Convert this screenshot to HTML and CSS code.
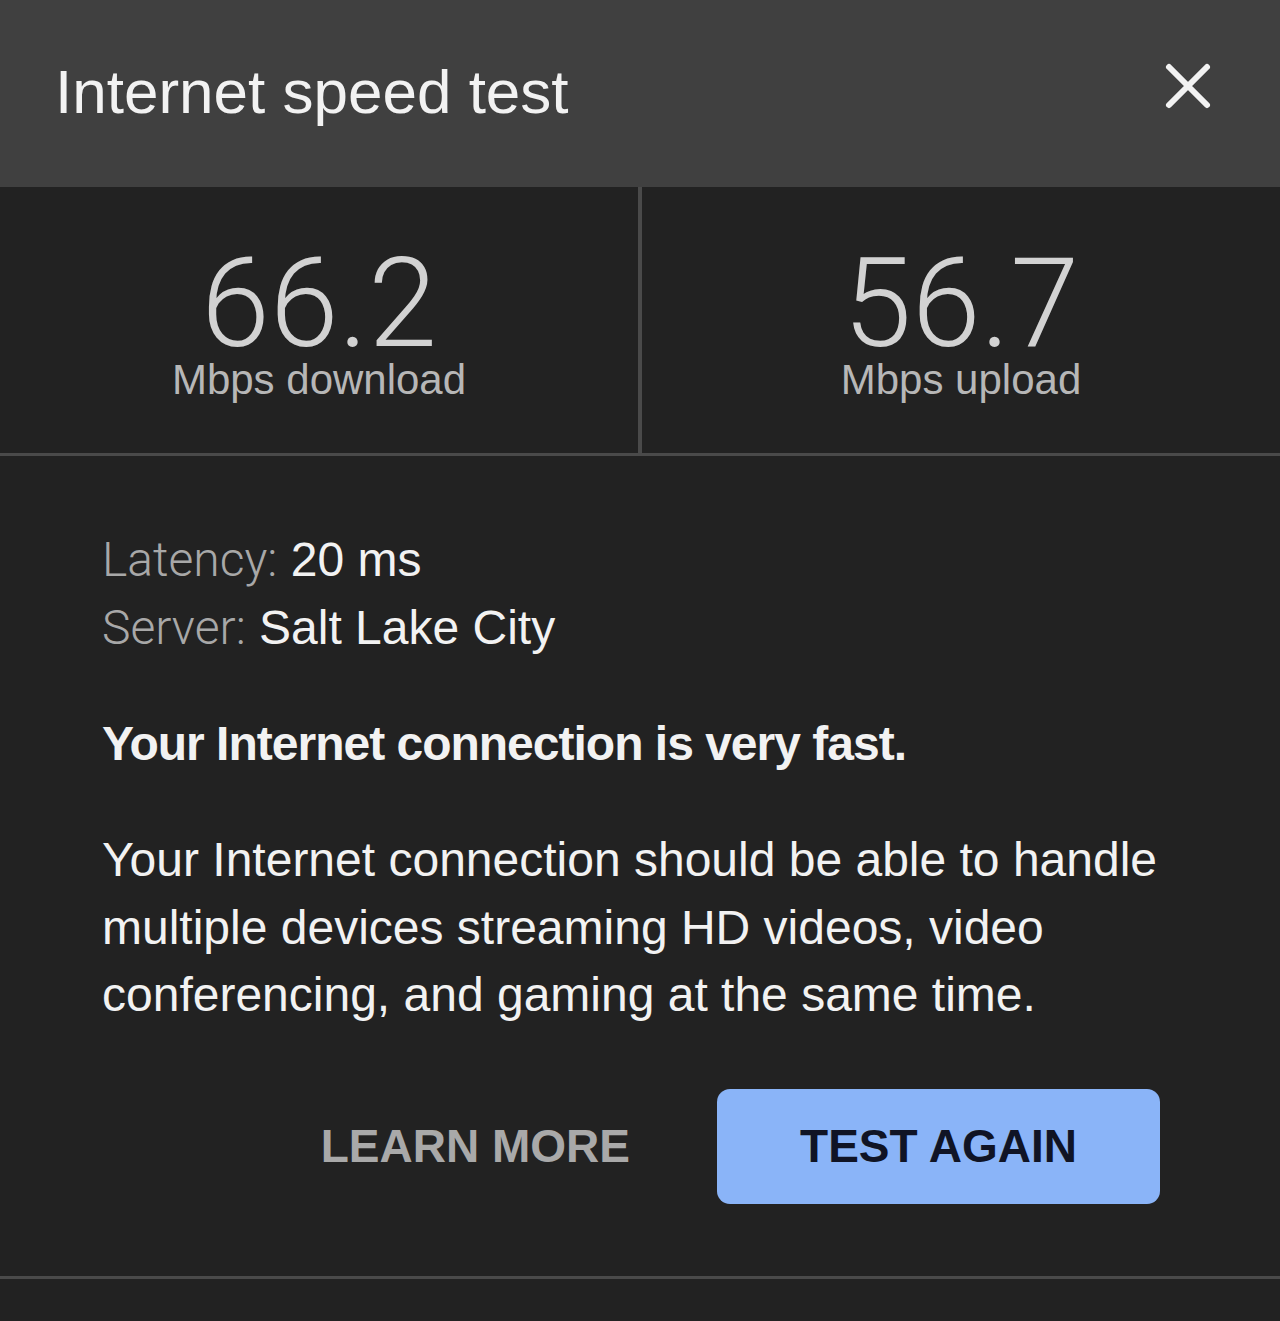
FILE: index.html
```html
<!DOCTYPE html>
<html lang="en">
<head>
<meta charset="utf-8">
<title>Internet speed test</title>
<link rel="stylesheet" href="styles.css">
</head>
<body>
<div class="card">
  <header class="head">
    <h1 class="title">Internet speed test</h1>
    <button class="close" aria-label="Close">
      <svg width="48" height="48" viewBox="0 0 48 48"><path d="M5 5 L43 43 M43 5 L5 43" stroke="#f2f2f2" stroke-width="6" stroke-linecap="round"/></svg>
    </button>
  </header>
  <section class="stats">
    <div class="stat">
      <div class="num">66.2</div>
      <div class="unit">Mbps download</div>
    </div>
    <div class="divider"></div>
    <div class="stat">
      <div class="num">56.7</div>
      <div class="unit">Mbps upload</div>
    </div>
  </section>
  <section class="details">
    <div class="meta">
      <div class="row"><span class="lbl">Latency:</span> <span class="val">20 ms</span></div>
      <div class="row"><span class="lbl">Server:</span> <span class="val">Salt Lake City</span></div>
    </div>
    <p class="verdict">Your Internet connection is very fast.</p>
    <p class="desc">Your Internet connection should be able to handle multiple devices streaming HD videos, video conferencing, and gaming at the same time.</p>
    <div class="actions">
      <button class="learn">LEARN MORE</button>
      <button class="again">TEST AGAIN</button>
    </div>
  </section>
  <div class="foot"></div>
</div>
</body>
</html>
```
FILE: styles.css
```css
html, body {
  margin: 0;
  padding: 0;
  background: #222222;
}
body {
  font-family: "Liberation Sans", Arial, sans-serif;
  width: 1280px;
  height: 1321px;
  overflow: hidden;
}
.card {
  display: flex;
  flex-direction: column;
}
.head {
  height: 187px;
  background: #404040;
  display: flex;
  align-items: center;
  justify-content: space-between;
  padding: 0 68px 0 55px;
  box-sizing: border-box;
}
.title {
  margin: 0;
  font-weight: 400;
  font-size: 62px;
  color: #f2f2f2;
  line-height: 1;
  padding-bottom: 4px;
}
.close {
  background: none;
  border: 0;
  padding: 0;
  width: 48px;
  height: 48px;
  display: flex;
  margin-top: -16px;
}
.stats {
  display: flex;
  height: 269px;
  border-bottom: 3px solid #4a4a4a;
  box-sizing: border-box;
}
.stat {
  flex: 1;
  display: flex;
  flex-direction: column;
  align-items: center;
  padding-top: 69px;
}
.divider {
  width: 4px;
  background: #4a4a4a;
}
.num {
  font-family: Roboto, "Liberation Sans", sans-serif;
  font-weight: 300;
  font-size: 124px;
  line-height: 96px;
  color: #d2d2d2;
}
.unit {
  font-size: 42px;
  line-height: 46px;
  color: #b7b7b7;
  margin-top: 5px;
}
.details {
  padding: 70px 0 0 102px;
  display: flex;
  flex-direction: column;
}
.row {
  font-size: 48px;
  line-height: 68px;
}
.lbl {
  color: #a8a8a8;
  font-family: Roboto, "Liberation Sans", sans-serif;
  font-weight: 300;
}
.val {
  color: #f2f2f2;
}
.verdict {
  margin: 48px 0 0;
  font-size: 48px;
  line-height: 68px;
  color: #f2f2f2;
  font-weight: 700;
  letter-spacing: -1px;
}
.desc {
  margin: 48px 0 0;
  width: 1100px;
  font-size: 48px;
  line-height: 67.5px;
  color: #f2f2f2;
}
.actions {
  display: flex;
  align-items: center;
  justify-content: flex-end;
  gap: 87px;
  width: 1058px;
  margin-top: 60px;
}
.learn {
  background: none;
  border: 0;
  padding: 0;
  font-family: "Liberation Sans", Arial, sans-serif;
  font-size: 46px;
  line-height: 1;
  color: #a9a9a9;
  font-weight: 700;
}
.again {
  width: 443px;
  height: 115px;
  border: 0;
  border-radius: 13px;
  background: #8ab4f8;
  color: #101425;
  font-family: "Liberation Sans", Arial, sans-serif;
  font-size: 46px;
  font-weight: 700;
}
.foot {
  margin-top: 72px;
  border-top: 3px solid #4a4a4a;
  height: 60px;
}
```
